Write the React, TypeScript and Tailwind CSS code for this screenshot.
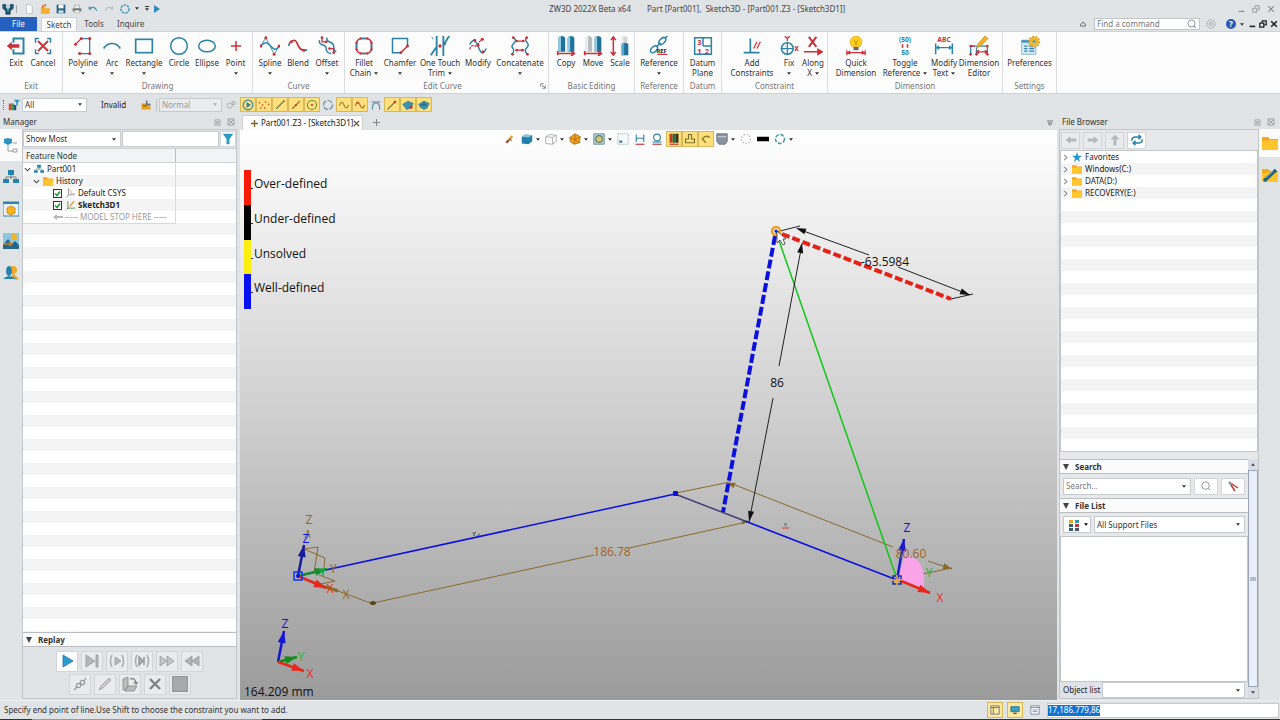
import type { ReactNode } from "react";
import clsx from "clsx";

const TEAL = "#2b83a6";
const RED = "#c9303a";

type IconProps = {
  children: ReactNode;
  box?: number;
  className?: string;
};

function Icon({ children, box = 24, className = "size-6" }: IconProps) {
  return (
    <svg viewBox={`0 0 ${box} ${box}`} className={clsx("shrink-0", className)} fill="none" stroke={TEAL} strokeWidth={1.5} aria-hidden="true">
      {children}
    </svg>
  );
}

function Caret({ className = "text-[#333]" }: { className?: string }) {
  return (
    <svg viewBox="0 0 6 4" className={clsx("h-[3px] w-1 shrink-0 pointer-events-none", className)} aria-hidden="true">
      <path d="M0 0h6L3 4z" fill="currentColor" />
    </svg>
  );
}

function Dots({ points, r = 1.4 }: { points: number[][]; r?: number }) {
  return (
    <g fill={RED} stroke="none">
      {points.map(([x, y]) => (
        <circle key={`${x}-${y}`} cx={x} cy={y} r={r} />
      ))}
    </g>
  );
}

/* ---------- ribbon ---------- */

const pillar = (x: number, y: number, h: number, fill: string, top: string) => (
  <g stroke="none">
    <path d={`M${x} ${y + 3}q0-3 3.5-3T${x + 8} ${y + 2}v${h}h-8z`} fill={fill} />
    <path d={`M${x} ${y + 4}q0-4 3-4v${h + 2}h-3z`} fill={top} />
  </g>
);

const ribbonIcons: Record<string, ReactNode> = {
  exit: (
    <>
      <path d="M9 8V3h12v18H9v-5" strokeWidth={2.4} />
      <path d="M1 12l6-5v3h9v4H7v3z" fill={RED} stroke="none" />
    </>
  ),
  cancel: (
    <>
      <path d="M3 8V3h4M17 3h4v5M21 16v5h-4M7 21H3v-5" strokeWidth={1.8} />
      <path d="M6 6l12 12M18 6L6 18" stroke={RED} strokeWidth={2.2} />
    </>
  ),
  polyline: (
    <>
      <path d="M10 3h10v18H8" />
      <path d="M3 10l7-7" stroke={RED} />
      <Dots points={[[3, 10], [10, 3], [20, 3], [20, 21], [8, 21]]} r={1.8} />
    </>
  ),
  arc: <path d="M2 15C7 7 17 7 22 15" strokeWidth={2} />,
  rectangle: <rect x="2" y="4" width="20" height="16" strokeWidth={2} />,
  circle: <circle cx="12" cy="12" r="10" strokeWidth={1.8} />,
  ellipse: <ellipse cx="12" cy="12" rx="10" ry="7" strokeWidth={1.8} />,
  point: <path d="M12 6v12M6 12h12" stroke={RED} strokeWidth={1.8} />,
  spline: (
    <>
      <path d="M1 12C6 6 9 8 12 11s6 9 11 1" strokeWidth={1.8} />
      <path d="M1 12L7 2l10 20 6-10" strokeWidth={1} />
      <Dots points={[[1, 12], [7, 2], [17, 22], [23, 12]]} r={1.8} />
    </>
  ),
  blend: (
    <>
      <path d="M4 7C8 3 10 6 12 11s4 6 7 6" stroke={RED} strokeWidth={2} />
      <path d="M1 12c0-2 1-4 3-5M18 17h5" strokeWidth={2} />
      <Dots points={[[4, 7], [19, 17]]} r={1.8} />
    </>
  ),
  offset: (
    <>
      <path d="M3 5c-2 8 8 3 8 10 0 4 3 6 6 6M12 2c-2 7 8 4 8 10 0 4 1 6 3 7" strokeWidth={1.8} />
      <path d="M6 2v5h5M20 20v-5h-5" stroke={RED} />
      <Dots points={[[6, 2], [11, 7], [15, 15], [20, 20]]} r={1.6} />
    </>
  ),
  fillet: (
    <>
      <rect x="3" y="3" width="18" height="18" rx="6" stroke={RED} strokeWidth={1.8} />
      <path d="M9 3h6M9 21h6M3 9v6M21 9v6" strokeWidth={2} />
      <Dots points={[[8, 3], [16, 3], [8, 21], [16, 21], [3, 8], [3, 16], [21, 8], [21, 16]]} />
    </>
  ),
  chamfer: (
    <>
      <path d="M21 12V3H3v17h10" strokeWidth={1.8} />
      <path d="M13 20l8-8" stroke={RED} strokeWidth={1.8} />
      <Dots points={[[13, 20], [21, 12]]} r={1.7} />
    </>
  ),
  trim: (
    <>
      <path d="M8 0v24M1 23l7-10M16 0v24M16 11l7-11M19 8l-3 4" strokeWidth={2.2} />
      <path d="M2 1l2 3" strokeWidth={1} />
      <Dots points={[[12, 12]]} r={2} />
    </>
  ),
  modify: (
    <>
      <path d="M2 10C7 1 10 7 12 12s5 14 10 3" strokeWidth={1.8} />
      <path d="M2 16c3-9 6-1 9-5s4-7 8-7" stroke={RED} strokeDasharray="3 1" />
      <Dots points={[[8, 5], [12, 11], [17, 4], [18, 19]]} r={1.8} />
    </>
  ),
  concatenate: (
    <>
      <path d="M4 2c8 5-5 8-1 12 3 4 1 6-1 8M20 2c-5 5 5 6 1 11-4 4-3 6 0 9" strokeWidth={1.8} />
      <path d="M8 6h8M8 17h7" stroke={RED} />
      <Dots points={[[4, 2], [20, 2], [8, 6], [16, 6], [8, 17], [15, 17], [3, 22], [21, 22]]} r={1.6} />
    </>
  ),
  copy: (
    <>
      {pillar(3, 0, 17, "#1f719b", "#8ecbe2")}
      {pillar(14, 0, 17, "#1f719b", "#8ecbe2")}
      <path d="M1 21h20M18 18l4 3-4 3M2 18v5" stroke={RED} strokeWidth={2} />
    </>
  ),
  move: (
    <>
      {pillar(3, 0, 17, "#b9bcc0", "#eceef0")}
      {pillar(14, 0, 17, "#1f719b", "#8ecbe2")}
      <path d="M1 21h20M18 18l4 3-4 3M2 18v5" stroke={RED} strokeWidth={2} />
    </>
  ),
  scale: (
    <>
      {pillar(13, 0, 21, "#d3d5d8", "#eff0f2")}
      {pillar(14, 8, 13, "#1f719b", "#5aa9cb")}
      <path d="M4 2v20M1 5l3-4 3 4M1 19l3 4 3-4" stroke={RED} strokeWidth={1.8} />
    </>
  ),
  reference: (
    <>
      <ellipse cx="16" cy="6" rx="5" ry="3" transform="rotate(-45 16 6)" strokeWidth={1.8} />
      <ellipse cx="6" cy="16" rx="5" ry="3" transform="rotate(-45 6 16)" strokeWidth={1.8} />
      <path d="M9 13l5-5M19 3l3-3" strokeWidth={1.8} />
      <text x="9" y="20" fontSize="7" fontWeight="700" fill="#222" stroke="none">REF</text>
      <path d="M10 22h12" stroke={RED} />
    </>
  ),
  datum: (
    <>
      <path d="M2 2h20v20H2zM12 12h10M12 2v10" strokeWidth={1.8} />
      <g fontSize="9" fontWeight="700" fill={RED} stroke="none">
        <text x="5" y="11">3</text>
        <text x="5" y="21">1</text>
        <text x="14" y="21">2</text>
      </g>
    </>
  ),
  addConstraint: (
    <>
      <path d="M10 3v17M2 20h19" strokeWidth={2} />
      <path d="M14 15l4-8M18 15l4-8" stroke={RED} />
    </>
  ),
  fix: (
    <>
      <circle cx="10" cy="15" r="7" strokeWidth={1.8} />
      <path d="M10 7v16M2 15h16" />
      <path d="M7 0l3 3 3-3M10 3v3M19 12l4 6M23 12l-4 6" stroke={RED} />
    </>
  ),
  along: (
    <>
      <path d="M7 1l9 12M16 1L7 13" stroke={RED} strokeWidth={2.4} />
      <path d="M1 19h17M18 16l5 3-5 3z" stroke={RED} strokeWidth={1.8} fill={RED} />
    </>
  ),
  quickDimension: (
    <>
      <circle cx="12" cy="7" r="7" fill="#fbd01f" stroke="#e9a90d" strokeWidth={1} />
      <path d="M10 5l2 6 2-6" stroke="#d98000" strokeWidth={1} />
      <path d="M9 13h6v4H9z" fill="#686868" stroke="none" />
      <path d="M1 17v6M23 17v6M2 20h20M5 18l-3 2 3 2M19 18l3 2-3 2" stroke={RED} />
    </>
  ),
  toggle: (
    <>
      <g fontSize="8" fontWeight="700" fill={TEAL} stroke="none" textAnchor="middle">
        <text x="12" y="7">(50)</text>
        <text x="12" y="23">50</text>
      </g>
      <path d="M9 10v4M15 10v4" stroke={RED} strokeWidth={1.8} />
    </>
  ),
  modifyText: (
    <>
      <text x="12" y="7" fontSize="8" fontWeight="700" fill={RED} stroke="none" textAnchor="middle">ABC</text>
      <path d="M2 9v13M22 9v13" strokeWidth={1.8} />
      <path d="M3 14h18M6 12l-3 2 3 2M18 12l3 2-3 2" />
    </>
  ),
  dimensionEditor: (
    <>
      <path d="M2 11v11M9 14v8M22 11v11M3 12h18" />
      <path d="M9 19h13M12 17l-3 2 3 2M19 17l3 2-3 2M2 12h5" stroke={RED} />
      <path d="M9 15l2-6 8-9 4 3-9 9z" fill="#f2b021" stroke="#b97618" strokeWidth={0.6} />
      <Dots points={[[2, 12], [22, 12], [2, 22], [9, 22], [22, 22]]} r={1.6} />
    </>
  ),
  preferences: (
    <>
      <path d="M2 5h17v17H2z" fill="#d7ebf5" stroke="#80aeca" strokeWidth={1} />
      <path d="M5 12h4M11 12h6M5 15h4M11 15h6M5 18h4M11 18h6" stroke="#3187b5" />
      <path d="M2 5h17v3H2z" fill="#3e91bd" stroke="none" />
      <circle cx="17" cy="7" r="4" stroke="#f0b62a" strokeWidth={4} />
      <circle cx="17" cy="7" r="6.600" stroke="#d99412" strokeDasharray="2 2" />
    </>
  ),
};

type Tool = { icon: string; lines: string[]; menu?: boolean; width: string };
type Group = { title: string; width: string; pad?: string; launcher?: boolean; tools: Tool[] };

const GROUPS: Group[] = [
  {
    title: "Exit",
    width: "w-[63px]",
    pad: "pl-[3px]",
    tools: [
      { icon: "exit", lines: ["Exit"], width: "w-[26px]" },
      { icon: "cancel", lines: ["Cancel"], width: "w-[28px]" },
    ],
  },
  {
    title: "Drawing",
    width: "w-[190px]",
    pad: "pl-1",
    tools: [
      { icon: "polyline", lines: ["Polyline"], menu: true, width: "w-[32px]" },
      { icon: "arc", lines: ["Arc"], menu: true, width: "w-[26px]" },
      { icon: "rectangle", lines: ["Rectangle"], menu: true, width: "w-[38px]" },
      { icon: "circle", lines: ["Circle"], width: "w-[32px]" },
      { icon: "ellipse", lines: ["Ellipse"], width: "w-[24px]" },
      { icon: "point", lines: ["Point"], menu: true, width: "w-[33px]" },
    ],
  },
  {
    title: "Curve",
    width: "w-[92px]",
    pad: "pl-[3px]",
    tools: [
      { icon: "spline", lines: ["Spline"], menu: true, width: "w-[28px]" },
      { icon: "blend", lines: ["Blend"], width: "w-[28px]" },
      { icon: "offset", lines: ["Offset"], menu: true, width: "w-[30px]" },
    ],
  },
  {
    title: "Edit Curve",
    width: "w-[204px]",
    pad: "pl-0.5",
    launcher: true,
    tools: [
      { icon: "fillet", lines: ["Fillet", "Chain"], menu: true, width: "w-[34px]" },
      { icon: "chamfer", lines: ["Chamfer"], menu: true, width: "w-[38px]" },
      { icon: "trim", lines: ["One Touch", "Trim"], menu: true, width: "w-[42px]" },
      { icon: "modify", lines: ["Modify"], width: "w-[34px]" },
      { icon: "concatenate", lines: ["Concatenate"], menu: true, width: "w-[50px]" },
    ],
  },
  {
    title: "Basic Editing",
    width: "w-[86px]",
    pad: "pl-[3px]",
    tools: [
      { icon: "copy", lines: ["Copy"], width: "w-[28px]" },
      { icon: "move", lines: ["Move"], width: "w-[26px]" },
      { icon: "scale", lines: ["Scale"], width: "w-[28px]" },
    ],
  },
  {
    title: "Reference",
    width: "w-[49px]",
    tools: [{ icon: "reference", lines: ["Reference"], menu: true, width: "w-[48px]" }],
  },
  {
    title: "Datum",
    width: "w-[38px]",
    tools: [{ icon: "datum", lines: ["Datum", "Plane"], width: "w-[37px]" }],
  },
  {
    title: "Constraint",
    width: "w-[106px]",
    pad: "pl-1.5",
    tools: [
      { icon: "addConstraint", lines: ["Add", "Constraints"], width: "w-[48px]" },
      { icon: "fix", lines: ["Fix"], menu: true, width: "w-[26px]" },
      { icon: "along", lines: ["Along", "X"], menu: true, width: "w-[22px]" },
    ],
  },
  {
    title: "Dimension",
    width: "w-[175px]",
    pad: "pl-1.5",
    tools: [
      { icon: "quickDimension", lines: ["Quick", "Dimension"], width: "w-[44px]" },
      { icon: "toggle", lines: ["Toggle", "Reference"], menu: true, width: "w-[54px]" },
      { icon: "modifyText", lines: ["Modify", "Text"], menu: true, width: "w-[24px]" },
      { icon: "dimensionEditor", lines: ["Dimension", "Editor"], width: "w-[46px]" },
    ],
  },
  {
    title: "Settings",
    width: "w-[54px]",
    tools: [{ icon: "preferences", lines: ["Preferences"], width: "w-[53px]" }],
  },
];

function RibbonButton({ icon, lines, menu, width }: Tool) {
  return (
    <button type="button" className={clsx("flex shrink-0 flex-col items-center whitespace-nowrap leading-[10px] text-[#333]", width)}>
      <Icon className="size-5">{ribbonIcons[icon]}</Icon>
      <span className="mt-0.5">{lines[0]}</span>
      {(lines[1] || menu) && (
        <span className="flex h-[10px] items-center gap-[3px]">
          {lines[1]}
          {menu && <Caret />}
        </span>
      )}
    </button>
  );
}

function Ribbon() {
  return (
    <div className="flex h-[63px] shrink-0 border-y border-[#cfd2d4] bg-[#fcfcfc]">
      {GROUPS.map((group) => (
        <section key={group.title} className={clsx("flex shrink-0 flex-col border-r border-[#dadcde]", group.width)} aria-label={group.title}>
          <div className={clsx("flex flex-1 items-start pt-1", group.pad)}>
            {group.tools.map((tool) => (
              <RibbonButton key={tool.icon} {...tool} />
            ))}
          </div>
          <div className="flex h-[14px] items-center text-[#777]">
            <span className="flex-1 text-center">{group.title}</span>
            {group.launcher && (
              <button type="button" aria-label="More settings" className="pr-0.5">
                <Icon box={8} className="size-1.5">
                  <path d="M1 5V1h4M3 3l4 4M7 3v4H3" stroke="#666" strokeWidth={1} />
                </Icon>
              </button>
            )}
          </div>
        </section>
      ))}
    </div>
  );
}

/* ---------- title and menu rows ---------- */

const quickIcons: { label: string; art: ReactNode }[] = [
  { label: "New", art: <path d="M4 1h6l3 3v11H4z" fill="#fff" stroke="#a9adb0" strokeWidth={1} /> },
  {
    label: "Open",
    art: (
      <>
        <path d="M2 5h5l1 2h7v8H2z" fill="#f6b12c" stroke="#dd9210" strokeWidth={0.6} />
        <path d="M4 7V2h5M7 0l3 2-3 3" stroke="#e06a1b" />
      </>
    ),
  },
  {
    label: "Save",
    art: (
      <>
        <path d="M1 1h14v14H1z" fill="#27617f" stroke="none" />
        <path d="M4 1h8v6H4z" fill="#fff" stroke="none" />
        <path d="M4 10h8v5H4z" fill="#b9dbe9" stroke="none" />
      </>
    ),
  },
  {
    label: "Print",
    art: (
      <>
        <path d="M4 2h8v5H4z" fill="#eee" stroke="#888" strokeWidth={0.8} />
        <path d="M1 7h14v5H1z" fill="#777" stroke="none" />
        <path d="M4 10h8v4H4z" fill="#fff" stroke="#888" strokeWidth={0.8} />
      </>
    ),
  },
  { label: "Undo", art: <path d="M2 8c4-5 10-3 12 3M2 4v4h4" stroke="#3f8fb0" strokeWidth={1.8} /> },
  { label: "Redo", art: <path d="M14 8C10 3 4 5 2 11M14 4v4h-4" stroke="#b9bec2" strokeWidth={1.8} /> },
  { label: "Regenerate", art: <circle cx="8" cy="8" r="6.500" strokeWidth={2.4} strokeDasharray="4 1.500" stroke="#4a9bb8" /> },
];

function TitleBar() {
  return (
    <div className="flex h-[17px] shrink-0 items-center pr-0.5 text-[#444]">
      <Icon box={16} className="ml-0.5 size-3">
        <path d="M1 2h4v4l3 3 3-3V2h4v5l-4 4v4H5v-4L1 7z" fill="#1d5878" stroke="#0f3550" strokeWidth={0.8} />
        <path d="M6 3h4M8 5v6" stroke="#8cc6dd" strokeWidth={1.4} />
      </Icon>
      <span className="ml-0.5 mr-1 h-2 w-px bg-[#aaa]" />
      {quickIcons.map(({ label, art }) => (
        <button key={label} type="button" aria-label={label} className="flex w-4 justify-center">
          <Icon box={16} className="size-2.5">{art}</Icon>
        </button>
      ))}
      <Caret className="ml-0.5 text-[#333]" />
      <span className="ml-1.5 flex flex-col items-center gap-px">
        <span className="h-px w-1 bg-[#333]" />
        <Caret />
      </span>
      <Icon box={8} className="ml-1 size-2">
        <path d="M1 0l6 4-6 4z" fill="#2c8ac0" stroke="none" />
      </Icon>
      <h1 className="flex flex-1 justify-center gap-4 whitespace-nowrap">
        <span>ZW3D 2022X Beta x64</span>
        <span>Part [Part001],&nbsp; Sketch3D - [Part001.Z3 - [Sketch3D1]]</span>
      </h1>
      <WindowButtons stroke="#888" />
    </div>
  );
}

function WindowButtons({ stroke, compact }: { stroke: string; compact?: boolean }) {
  const cell = compact ? "flex w-[11px] justify-center" : "flex w-[15px] justify-center";
  return (
    <>
      <button type="button" aria-label="Minimize" className={cell}>
        <Icon box={10} className="size-2"><path d="M2 8h7" stroke={stroke} strokeWidth={compact ? 2 : 1.4} /></Icon>
      </button>
      <button type="button" aria-label="Restore" className={cell}>
        <Icon box={10} className="size-2"><path d="M1 4h5v5H1zM4 3V1h5v5H7" stroke={stroke} strokeWidth={compact ? 1.6 : 1} /></Icon>
      </button>
      <button type="button" aria-label="Close" className={cell}>
        <Icon box={10} className="size-2"><path d="M1.500 1.500l7 7M8.500 1.500l-7 7" stroke={stroke} strokeWidth={compact ? 2 : 1.4} /></Icon>
      </button>
    </>
  );
}

function MenuRow() {
  return (
    <div className="flex h-[14px] shrink-0 items-center pr-px text-[#444]">
      <button type="button" className="h-full w-[37px] bg-[#2460c0] text-white">File</button>
      <button type="button" className="ml-1 h-full w-[36px] border border-b-0 border-[#cfd2d4] bg-[#fcfcfc]">Sketch</button>
      <button type="button" className="ml-1.5 w-[22px]">Tools</button>
      <button type="button" className="ml-3 w-[26px]">Inquire</button>
      <span className="flex-1" />
      <button type="button" aria-label="Collapse ribbon" className="mr-[7px]">
        <Icon box={8} className="size-2"><path d="M1 6h6M1 5l3-3 3 3" stroke="#666" strokeWidth={1} /></Icon>
      </button>
      <label className="flex h-3 w-[106px] items-center border border-[#c3c6c9] bg-white px-0.5">
        <input type="search" aria-label="Find a command" placeholder="Find a command" className="min-w-0 flex-1 outline-none placeholder:text-[#777]" />
        <Icon box={10} className="size-2.5"><path d="M7 7l2 2M8 4.500a3.500 3.500 0 1 1-7 0 3.500 3.500 0 0 1 7 0z" stroke="#888" strokeWidth={0.9} /></Icon>
      </label>
      <Icon box={12} className="ml-1.5 size-2.5">
        <circle cx="6" cy="6" r="5" stroke="#999" strokeWidth={1.2} strokeDasharray="2 1" />
        <circle cx="6" cy="6" r="2" stroke="#999" strokeWidth={1} />
      </Icon>
      <button type="button" aria-label="Help" className="ml-2.5 flex size-2.5 items-center justify-center rounded-full bg-[#2a59b5] font-bold leading-[10px] text-white">?</button>
      <Caret className="ml-1 mr-0.5 text-[#333]" />
      <WindowButtons stroke="#222" compact />
    </div>
  );
}

/* ---------- filter bar ---------- */

type ComboProps = {
  label: string;
  value: string;
  className?: string;
  disabled?: boolean;
};

function Combo({ label, value, className, disabled }: ComboProps) {
  return (
    <div className={clsx("flex items-center border border-[#c8cbce] pl-0.5 pr-1", disabled ? "bg-[#e9ebec] text-[#999]" : "bg-white text-[#333]", className)}>
      <select aria-label={label} disabled={disabled} defaultValue={value} className="min-w-0 flex-1 appearance-none bg-transparent outline-none">
        <option>{value}</option>
      </select>
      <Caret className={disabled ? "text-[#aaa]" : "text-[#333]"} />
    </div>
  );
}

const snapTools: { label: string; lit: boolean; art: ReactNode }[] = [
  {
    label: "Snap on",
    lit: true,
    art: (
      <>
        <circle cx="8" cy="8" r="6.500" />
        <path d="M6 4l6 4-6 4z" fill={TEAL} stroke="none" />
      </>
    ),
  },
  { label: "Points", lit: true, art: <Dots points={[[2, 5], [6, 8], [10, 4], [14, 7], [4, 12], [9, 12]]} r={1.1} /> },
  { label: "End point", lit: true, art: <><path d="M3 13L12 4" stroke="#5b7a52" /><Dots points={[[13, 3]]} /></> },
  { label: "Mid point", lit: true, art: <><path d="M3 13L13 3" stroke="#8a6a32" /><Dots points={[[8, 8]]} /></> },
  { label: "Center", lit: true, art: <><circle cx="8" cy="8" r="6" stroke="#6f8a4a" /><Dots points={[[8, 8]]} /></> },
  { label: "Quadrant", lit: false, art: <circle cx="8" cy="8" r="6" stroke="#6590a8" strokeDasharray="7 2" /> },
  { label: "Knots", lit: true, art: <path d="M2 9C4 1 7 5 8 8s4 7 6 0" stroke="#8f8338" /> },
  { label: "Curve", lit: true, art: <><path d="M2 9C4 1 7 5 8 8s4 7 6 0" stroke="#a36a32" /><Dots points={[[5, 5]]} /></> },
  { label: "Tangent", lit: false, art: <><path d="M2 4h12" stroke="#889" /><path d="M3 14C3 2 13 2 13 14" stroke="#4f89ad" /></> },
  { label: "Line", lit: true, art: <><path d="M2 14L12 4" stroke="#6f7440" /><Dots points={[[12, 4]]} r={1.8} /></> },
  { label: "Face", lit: true, art: <><path d="M1 7l7-4 7 3-3 6-6 2z" fill="#3b93b5" stroke="#23708f" strokeWidth={0.8} /><Dots points={[[12, 11]]} r={2} /></> },
  { label: "Solid", lit: true, art: <><path d="M1 7l7-4 7 3-3 6-4 2-5-3z" fill="#3b93b5" stroke="#23708f" strokeWidth={0.8} /><path d="M8 3v5M3 8h9" stroke="#1c4d70" strokeWidth={1} /></> },
];

function FilterBar() {
  return (
    <div className="flex h-[21px] shrink-0 items-center text-[#222]">
      <span className="ml-[3px] h-2.5 border-l border-dotted border-[#666]" />
      <Icon box={16} className="ml-1 size-3">
        <path d="M1 6h4v9H1z" fill="#c8502c" stroke="none" />
        <path d="M5 6h3v9H5z" fill="#3a9455" stroke="none" />
        <path d="M8 8h3v7H8z" fill="#1d5878" stroke="none" />
        <path d="M8 1h8l-3 4v4h-2V5z" fill="#2b9ac6" stroke="none" />
      </Icon>
      <Combo label="Pick filter" value="All" className="ml-0.5 h-[14px] w-[65px]" />
      <span className="ml-[14px] w-[25px] text-center">Invalid</span>
      <Icon box={16} className="ml-[14px] size-3">
        <path d="M2 6h7l2 2h3v6H2z" fill="#e9a11f" stroke="none" />
        <path d="M9 2v5h5M4 9h5" stroke="#2f5568" />
      </Icon>
      <span className="ml-1 h-3 w-px bg-[#c3c6c9]" />
      <Combo label="Line style" value="Normal" disabled className="ml-0.5 h-[14px] w-[63px]" />
      <Icon box={16} className="mx-1 size-2.5">
        <circle cx="6" cy="9" r="4" stroke="#aaa" strokeWidth={2} strokeDasharray="2 1" />
        <circle cx="12" cy="5" r="2.500" stroke="#999" />
      </Icon>
      {snapTools.map(({ label, lit, art }) => (
        <button
          key={label}
          type="button"
          aria-label={label}
          aria-pressed={lit}
          className={clsx("flex h-[15px] w-4 items-center justify-center border", lit ? "border-[#d7b95c] bg-[#ffe07a]" : "border-transparent")}
        >
          <Icon box={16} className="size-3">{art}</Icon>
        </button>
      ))}
    </div>
  );
}

/* ---------- manager panel ---------- */

function PanelTitle({ children }: { children: ReactNode }) {
  return (
    <div className="flex h-[14px] shrink-0 items-center px-[3px] text-[#333]">
      <h2 className="flex-1">{children}</h2>
      <button type="button" aria-label="Float panel" className="mr-1.5">
        <Icon box={8} className="size-[7px]"><path d="M1 1h6v6H1zM3 3h2v2H3z" stroke="#8b8e91" strokeWidth={0.8} /></Icon>
      </button>
      <button type="button" aria-label="Close panel" className="mr-0.5">
        <Icon box={8} className="size-2"><path d="M1 1h6v6H1zM2 2l4 4M6 2L2 6" stroke="#8b8e91" strokeWidth={0.8} /></Icon>
      </button>
    </div>
  );
}

const FOLDER = (
  <>
    <path d="M0 2h6l2 2h8v11H0z" fill="#f5a91a" stroke="none" />
    <path d="M0 6h5l2-1h9v10H0z" fill="#ffc52e" stroke="none" />
  </>
);

const TREE_ART = (
  <>
    <path d="M8 5v5M3 10V8h10v2" stroke="#777" strokeWidth={1} />
    <path d="M5 1h6v5H5zM0 10h6v4H0zM10 10h6v4h-6z" fill="#2383ac" stroke="none" />
  </>
);

const managerTabs: { label: string; art: ReactNode }[] = [
  {
    label: "History",
    art: (
      <>
        <path d="M1 2l4-1 4 1v4L5 8 1 6z" fill="#2c93bd" stroke="none" />
        <path d="M5 8v6h5M10 6h4M10 12h4v3h-4z" stroke="#7d8c96" strokeWidth={0.8} />
      </>
    ),
  },
  { label: "Assembly", art: TREE_ART },
  {
    label: "Visual",
    art: (
      <>
        <path d="M0 1h16v14H0z" fill="#e9f3f8" stroke="#2f86ac" strokeWidth={1} />
        <path d="M0 1h16v2H0z" fill="#2f86ac" stroke="none" />
        <path d="M4 7l4-2 4 2v5l-4 2-4-2z" fill="#f9b41c" stroke="#c77d0c" strokeWidth={0.8} />
      </>
    ),
  },
  {
    label: "View",
    art: (
      <>
        <path d="M0 0h16v16H0z" fill="#8fc7e0" stroke="none" />
        <path d="M0 12l5-6 4 5 3-3 4 4v4H0z" fill="#22688d" stroke="none" />
        <circle cx="11" cy="4" r="3" fill="#f9b41c" stroke="none" />
        <path d="M1 11h7M6 9l3 2-3 2" stroke="#d47b22" />
      </>
    ),
  },
  {
    label: "Role",
    art: (
      <>
        <circle cx="10" cy="5" r="4" fill="#f0a92a" stroke="none" />
        <path d="M8 13l2-5 6 6-3 1z" fill="#f0a92a" stroke="none" />
        <ellipse cx="6" cy="6" rx="3" ry="5" fill="#2a83ad" stroke="none" />
        <path d="M0 14q6-6 13 0z" fill="#2a83ad" stroke="none" />
      </>
    ),
  },
];

function Chevron({ open }: { open?: boolean }) {
  return (
    <Icon box={8} className="size-[7px]">
      <path d={open ? "M1 2.500l3 3 3-3" : "M2.500 1l3 3-3 3"} stroke={open ? "#444" : "#888"} strokeWidth={1.2} />
    </Icon>
  );
}

function CheckItem({ label, bold, art }: { label: string; bold?: boolean; art: ReactNode }) {
  return (
    <label className="flex h-3 items-center pl-[30px]">
      <span className="grid">
        <input type="checkbox" defaultChecked className="col-start-1 row-start-1 size-[9px] appearance-none border border-[#333] bg-white" />
        <svg viewBox="0 0 9 9" className="pointer-events-none col-start-1 row-start-1 size-[9px]" fill="none" stroke="#1c9b34" strokeWidth="1.500" aria-hidden="true">
          <path d="M2 4.500l2 2 3-4" />
        </svg>
      </span>
      <Icon box={16} className="ml-1 mr-0.5 size-2.5">{art}</Icon>
      <span className={clsx(bold && "font-bold")}>{label}</span>
    </label>
  );
}

const replayRows: { label: string; art: ReactNode }[][] = [
  [
    { label: "Play", art: <path d="M4 2l10 6-10 6z" fill="#2a9bcc" stroke="#1b79a4" strokeWidth={0.8} /> },
    { label: "Step", art: <path d="M2 2l9 6-9 6zM12 2h2v12h-2z" fill="#b5b7b9" stroke="#999" strokeWidth={0.8} /> },
    { label: "Play to", art: <><path d="M6 4l6 4-6 4z" fill="#b5b7b9" stroke="#999" strokeWidth={0.8} /><path d="M3 2Q0 8 3 14M13 2q3 6 0 12" stroke="#aaa" /></> },
    { label: "Play feature", art: <><path d="M5 4l4 4-4 4zM10 4v8" fill="#b5b7b9" stroke="#999" /><path d="M3 2Q0 8 3 14M13 2q3 6 0 12" stroke="#aaa" /></> },
    { label: "Fast forward", art: <path d="M1 3l7 5-7 5zM8 3l7 5-7 5z" fill="#c3c5c7" stroke="#999" strokeWidth={0.8} /> },
    { label: "Rewind", art: <path d="M8 3L1 8l7 5zM15 3L8 8l7 5z" fill="#b0b2b4" stroke="#999" strokeWidth={0.8} /> },
  ],
  [
    { label: "Link", art: <path d="M2 14l3-3M12 5l2-3M5 11a2 2 0 1 1 3-3 2 2 0 1 1-3 3zM9 8a2 2 0 1 1 3-3 2 2 0 1 1-3 3z" stroke="#999" strokeWidth={1.2} /> },
    { label: "Edit", art: <path d="M2 14l2-4 8-8 2 2-8 8z" fill="#ccc" stroke="#999" strokeWidth={0.8} /> },
    { label: "Rollback", art: <><path d="M1 3l5-2v9l-3 4H1zM6 10h9l-3 5H3z" fill="#bbb" stroke="#888" strokeWidth={0.8} /><path d="M8 3q5-2 6 4M12 6l2 2 2-2" stroke="#888" /></> },
    { label: "Delete", art: <path d="M3 3l10 10M13 3L3 13" stroke="#808284" strokeWidth={2.4} /> },
    { label: "Image", art: <path d="M0 0h16v16H0z" fill="#a6a8a9" stroke="#8c8e90" /> },
  ],
];

function SectionTitle({ children }: { children: ReactNode }) {
  return (
    <div className="flex h-[15px] shrink-0 items-center gap-1.5 border-y border-[#b9bdc1] bg-[#fbfbfb] pl-[3px] font-bold text-[#333]">
      <svg viewBox="0 0 6 6" className="size-1.5" aria-hidden="true"><path d="M0 0h6L3 6z" fill="#444" /></svg>
      <h3>{children}</h3>
    </div>
  );
}

const STRIPES = "bg-[repeating-linear-gradient(#ffffff_0px_12px,#f4f4f4_12px_24px)]";

function ManagerPanel() {
  return (
    <aside className="flex w-[240px] shrink-0 flex-col">
      <PanelTitle>Manager</PanelTitle>
      <div className="flex min-h-0 flex-1 pb-px pr-[3px]">
        <nav className="flex w-[22px] shrink-0 flex-col" aria-label="Manager pages">
          {managerTabs.map(({ label, art }, i) => (
            <button key={label} type="button" aria-label={label} className={clsx("flex h-8 items-center justify-center", i === 0 && "bg-[#fbfbfb]")}>
              <Icon box={16} className="size-4">{art}</Icon>
            </button>
          ))}
        </nav>
        <div className="flex min-w-0 flex-1 flex-col border border-[#c3c6c9]">
          <div className="flex h-[18px] shrink-0 items-center gap-px">
            <Combo label="Show" value="Show Most" className="h-4 w-[98px]" />
            <input type="text" aria-label="Filter features" className="h-4 min-w-0 flex-1 border border-[#c8cbce] bg-white px-1 outline-none" />
            <button type="button" aria-label="Filter" className="flex h-4 w-4 items-center justify-center border border-[#d3d6d8] bg-white">
              <Icon box={16} className="size-3"><path d="M1 1h14L10 8v7H6V8z" fill="#2b9ac6" stroke="none" /></Icon>
            </button>
          </div>
          <div className="flex h-[15px] shrink-0 items-center border-y border-[#cfd2d4] bg-[#f2f3f4] text-[#333]">
            <span className="flex h-full w-[153px] items-center border-r border-[#b9bdc1] pl-[3px]">Feature Node</span>
          </div>
          <div className={clsx("min-h-0 flex-1 text-[#222]", STRIPES)}>
            <div className="w-[153px] border-r border-b border-[#d8dadc]">
              <div className="flex h-3 items-center gap-[3px] pl-px"><Chevron open /><Icon box={16} className="size-2.5">{TREE_ART}</Icon>Part001</div>
              <div className="flex h-3 items-center gap-[3px] pl-[10px]"><Chevron open /><Icon box={16} className="size-2.5">{FOLDER}</Icon>History</div>
              <CheckItem label="Default CSYS" art={<><path d="M4 1v10l-3 4M4 11h10" stroke="#999" /><path d="M4 1l4 4v4h6" stroke="#d98484" strokeWidth={1} /></>} />
              <CheckItem label="Sketch3D1" bold art={<><path d="M3 2v11h12" stroke="#53a05a" /><path d="M6 10l7-8" stroke="#e79c2b" strokeWidth={2} /><path d="M1 15l3-3" /></>} />
              <div className="flex h-3 items-center gap-0.5 whitespace-nowrap pl-[30px] text-[#999]">
                <Icon box={10} className="size-2.5"><path d="M0 5l4-3v2h6v2H4v2z" fill="#b5b7b9" stroke="none" /></Icon>
                ----- MODEL STOP HERE -----
              </div>
            </div>
          </div>
          <SectionTitle>Replay</SectionTitle>
          <div className="flex h-[51px] shrink-0 flex-col items-center justify-center gap-0.5">
            {replayRows.map((row, r) => (
              <div key={r} className="flex gap-[3px]">
                {row.map(({ label, art }, i) => (
                  <button key={label} type="button" aria-label={label} className={clsx("flex h-[21px] w-[22px] items-center justify-center border border-[#d3d6d8]", r === 0 && i === 0 ? "bg-white" : "bg-[#e9ebec]")}>
                    <Icon box={16} className="size-4">{art}</Icon>
                  </button>
                ))}
              </div>
            ))}
          </div>
        </div>
      </div>
    </aside>
  );
}

/* ---------- 3D view ---------- */

const legend = [
  { label: "Over-defined", color: "bg-[#f81c08]" },
  { label: "Under-defined", color: "bg-black" },
  { label: "Unsolved", color: "bg-[#fcee10]" },
  { label: "Well-defined", color: "bg-[#0810f0]" },
];

type ViewTool = { label: string; art: ReactNode; menu?: boolean; lit?: boolean };

const viewTools: ViewTool[] = [
  { label: "Brush", art: <><path d="M5 11l6-7" stroke="#e0a13a" strokeWidth={3.400} /><path d="M3 13l3-3" stroke="#9a4330" strokeWidth={3} /><path d="M7 8l3 2" stroke="#557" /></> },
  { label: "Shaded", menu: true, art: <><path d="M1 5l5-3 9 1v8l-5 4-9-1z" fill="#2480a8" stroke="none" /><path d="M1 5l5-3 9 1-5 3z" fill="#85c6df" stroke="none" /></> },
  { label: "Wireframe", menu: true, art: <path d="M1 5l5-3 9 1v8l-5 4-9-1zM1 5l9 1 5-3M10 6v9" stroke="#999" strokeWidth={1} /> },
  { label: "Facets", menu: true, art: <><path d="M1 6l7-5 7 4-1 8-7 2-5-3z" fill="#f3a51f" stroke="#a9640e" strokeWidth={1} /><path d="M1 6l7 3 7-4M8 9l-1 6M8 1v8l6 4" stroke="#a9640e" strokeWidth={1} /></> },
  { label: "Zoom", menu: true, art: <><path d="M1 1h14v14H1z" fill="#a9cfdd" stroke="#587f93" strokeWidth={1} /><circle cx="8" cy="8" r="4.500" fill="#d6c87a" stroke="#6b7b52" /></> },
  { label: "Window", art: <><path d="M1 1h14v14H1z" fill="#f5f9fb" stroke="#8fabb9" strokeWidth={1} strokeDasharray="2 1" /><path d="M3 10h4v3H3z" fill={TEAL} stroke="none" /></> },
  { label: "Height", art: <><path d="M3 2v10M13 2v10M3 7h10" /><path d="M2 15h12" stroke={RED} /></> },
  { label: "Align", art: <><circle cx="8" cy="6" r="4.500" /><path d="M2 12h12" /><path d="M2 15h12" stroke={RED} /></> },
  { label: "Constraint colours", lit: true, art: <><path d="M2 1h4v12H2z" fill="#c8391c" stroke="none" /><path d="M6 1h4v12H6z" fill="#2c6b3a" stroke="none" /><path d="M10 1h4v12h-4z" fill="#3a2f20" stroke="none" /><path d="M2 15h12" stroke={RED} /></> },
  { label: "Show constraints", lit: true, art: <path d="M6 2h4v6h4v5H2V8h4z" stroke="#75702f" /> },
  { label: "Show open ends", lit: true, art: <path d="M13 6Q8 2 3 8l5 5" stroke="#8a8030" strokeWidth={2} /> },
  { label: "Background", menu: true, art: <><path d="M1 1h14v10l-3 4H4l-3-4z" fill="#8a93a0" stroke="#5f6670" strokeWidth={1} /><path d="M2 5h12" stroke="#c7d0da" /></> },
  { label: "Hidden", art: <circle cx="8" cy="8" r="6" stroke="#aab4ba" strokeDasharray="2 2" /> },
  { label: "Line width", art: <path d="M0 5h16v6H0z" fill="#000" stroke="none" /> },
  { label: "Regenerate", menu: true, art: <circle cx="8" cy="8" r="6" stroke="#4a9ba8" strokeWidth={2} strokeDasharray="5 2" /> },
];

function ViewToolbar() {
  return (
    <div className="absolute inset-x-0 top-px flex h-4 justify-center">
      {viewTools.map(({ label, art, menu, lit }) => (
        <button
          key={label}
          type="button"
          aria-label={label}
          className={clsx(
            "flex items-center",
            menu ? "w-6 gap-[3px] pl-0.5" : "justify-center",
            lit ? "w-4 border border-[#d7b95c] bg-[#ffe07a]" : !menu && "w-[17px]",
          )}
        >
          <Icon box={16} className="size-3">{art}</Icon>
          {menu && <Caret />}
        </button>
      ))}
    </div>
  );
}

type Point = [number, number];

// Filled arrow whose tip sits on `to`, pointing away from `from`
function ArrowHead({ from, to, size = 10, half = 3, fill }: { from: Point; to: Point; size?: number; half?: number; fill: string }) {
  const angle = (Math.atan2(to[1] - from[1], to[0] - from[0]) * 180) / Math.PI;
  return (
    <path
      d={`M0 0L${-size} ${-half}L${-size} ${half}Z`}
      transform={`translate(${to[0]} ${to[1]}) rotate(${angle})`}
      fill={fill}
      stroke="none"
    />
  );
}

function Axis({ from, to, color }: { from: Point; to: Point; color: string }) {
  return (
    <g>
      <line x1={from[0]} y1={from[1]} x2={to[0]} y2={to[1]} stroke={color} strokeWidth={2.5} />
      <ArrowHead from={from} to={to} size={12} half={4} fill={color} />
    </g>
  );
}

const OLIVE = "#8a6a2c";
const BLUE = "#0c10dc";

function SketchDrawing() {
  return (
    <svg viewBox="240 130 817 569" preserveAspectRatio="xMinYMin meet" className="block h-full w-full" fill="none" role="img" aria-label="3D sketch">
      {/* reference dimensions */}
      <g stroke={OLIVE} strokeWidth={1}>
        <path d="M298 576L373 604M373 603L594 555M629 548L747 522M676 493L730 482M730 483L893 547M928 561L952 569M897 579L952 568" />
        <path d="M304 549l14-2-4 26M304 549l21 9-2 18M319 575l16 6-14 3" />
      </g>
      <ellipse cx="373" cy="603" rx="3" ry="2" fill="#59461d" />
      <ArrowHead from={[629, 548]} to={[749, 521]} size={7} half={2} fill={OLIVE} />
      <ArrowHead from={[893, 547]} to={[728, 483]} size={7} half={3} fill={OLIVE} />
      <ArrowHead from={[928, 561]} to={[952, 569]} size={9} half={3} fill={OLIVE} />

      {/* base lines */}
      <path d="M897 580L905 555Q924 558 924 580L924 588z" fill="#f9a4e6" />
      <path d="M298 576L675 494M745 521L897 580" stroke={BLUE} strokeWidth={1.5} />
      <path d="M675 494L745 521" stroke="#433f78" strokeWidth={1.5} />
      <rect x="673" y="491" width="5" height="5" rx="1" fill={BLUE} />

      {/* driven lines */}
      <path d="M776 232L897 579" stroke="#10c818" strokeWidth={1.5} />
      <path d="M775 236L723 512" stroke={BLUE} strokeWidth={4} strokeDasharray="9 3" />
      <path d="M782 234L951 299" stroke="#e42218" strokeWidth={4} strokeDasharray="8 3" />

      <g stroke="#222" strokeWidth={1}>
        <path d="M776 232l24-6M951 299l22-5" />
        <path d="M798 229L869 255M898 267L970 295" />
        <path d="M802 244L779 366M773 398L749 522" />
      </g>
      <ArrowHead from={[869, 255]} to={[796, 228]} fill="#111" />
      <ArrowHead from={[898, 267]} to={[970, 295]} fill="#111" />
      <ArrowHead from={[779, 366]} to={[802, 243]} fill="#111" />
      <ArrowHead from={[773, 398]} to={[749, 522]} size={11} fill="#111" />

      {/* picked point and pointer */}
      <circle cx="776" cy="231" r="4" stroke="#f0a020" strokeWidth={2.5} />
      <circle cx="776" cy="231" r="1.500" fill={BLUE} />
      <path d="M777 231v12l3-3 3 5 2-1-2-5h3z" fill="#fff" stroke="#333" strokeWidth={0.8} />

      {/* origin */}
      <Axis from={[298, 576]} to={[304, 545]} color="#1a1a9c" />
      <Axis from={[298, 576]} to={[327, 569]} color="#188c30" />
      <Axis from={[298, 576]} to={[326, 588]} color="#e8281c" />
      <path d="M305 538l3-8 2 8" stroke={OLIVE} />
      <path d="M326 587l12 4" stroke={OLIVE} strokeWidth={3} />
      <rect x="294" y="572" width="8" height="8" stroke="#0a34ff" strokeWidth={1.5} />
      <circle cx="298" cy="576" r="2" fill={BLUE} />

      {/* active sketch frame */}
      <Axis from={[897, 580]} to={[904, 539]} color="#1a1acc" />
      <Axis from={[899, 580]} to={[930, 593]} color="#e8281c" />
      <rect x="893" y="576" width="8" height="8" stroke="#172e9c" strokeWidth={1.5} />
      <path d="M897 575v10M892 580h10" stroke="#f0b030" strokeWidth={1.5} />

      {/* view triad */}
      <Axis from={[278, 662]} to={[284, 631]} color="#1515d8" />
      <Axis from={[278, 662]} to={[297, 657]} color="#128c1c" />
      <Axis from={[278, 662]} to={[304, 671]} color="#e8281c" />

      <g fontSize="12" textAnchor="middle">
        <text x="309" y="524" fill={OLIVE}>Z</text>
        <text x="306" y="543" fill={BLUE}>Z</text>
        <text x="322" y="576" fill="#20b838" fontSize="11">Y</text>
        <text x="333" y="573" fill={OLIVE}>Y</text>
        <text x="330" y="593" fill="#f02c20">X</text>
        <text x="346" y="599" fill={OLIVE}>X</text>
        <text x="907" y="532" fill={BLUE}>Z</text>
        <text x="929" y="577" fill="#20b838">Y</text>
        <text x="940" y="602" fill="#f02c20">X</text>
        <text x="285" y="628" fill={BLUE}>Z</text>
        <text x="301" y="661" fill="#20b838">Y</text>
        <text x="310" y="678" fill="#f02c20">X</text>
        <text x="885" y="266" fill="#111">-63.5984</text>
        <text x="777" y="387" fill="#111">86</text>
        <text x="612" y="556" fill="#a86018">186.78</text>
        <text x="911" y="558" fill="#a86018">80.60</text>
      </g>
      <g strokeWidth={1}>
        <path d="M473 532l1 2 2-2M474 534v2M477 536l3-2" stroke="#345c48" />
        <path d="M782 528h7M784 526l3-3M784 523l3 3" stroke="#d83a34" />
      </g>
    </svg>
  );
}

function Workspace() {
  return (
    <main className="flex min-w-0 flex-1 flex-col">
      <div className="flex h-[15px] shrink-0 items-center pr-[3px]">
        <div className="ml-0.5 flex h-full w-[121px] items-center border border-b-0 border-[#cfd2d4] bg-[#fcfcfc] pl-2 text-[#222]">
          <Icon box={8} className="size-[7px]"><path d="M4 0v8M0 4h8" stroke="#7b6a38" strokeWidth={1.6} /></Icon>
          <span className="ml-[3px] flex-1 whitespace-nowrap">Part001.Z3 - [Sketch3D1]</span>
          <button type="button" aria-label="Close document" className="mr-[3px]">
            <Icon box={8} className="size-[7px]"><path d="M1 1l6 6M7 1L1 7" stroke="#5b5436" strokeWidth={1.6} /></Icon>
          </button>
        </div>
        <button type="button" aria-label="New document" className="ml-2.5">
          <Icon box={8} className="size-[7px]"><path d="M4 0v8M0 4h8" stroke="#888" strokeWidth={1.2} /></Icon>
        </button>
        <span className="flex-1" />
        <Icon box={8} className="size-2"><path d="M1 2h6M2 4l2 2.500L6 4z" stroke="#777" strokeWidth={1} /></Icon>
      </div>
      <div className="relative min-h-0 flex-1 bg-linear-to-b from-white via-[#cfcfcf] to-[#9b9b9b] font-['Open_Sans','Noto_Sans',sans-serif]">
        <SketchDrawing />
        <ViewToolbar />
        <ul className="absolute left-1 top-10 flex h-[139px] flex-col text-[12px] text-[#111]">
          {legend.map(({ label, color }) => (
            <li key={label} className="flex flex-1">
              <span className={clsx("w-[7px]", color)} />
              <span className="mr-px mt-[18px] h-px w-0.5 bg-[#333]" />
              <span className="leading-[27px]">{label}</span>
            </li>
          ))}
        </ul>
        <p className="absolute bottom-0 left-1 text-[12px] leading-4 text-[#111]">164.209 mm</p>
      </div>
    </main>
  );
}

/* ---------- file browser ---------- */

const drives = ["Windows(C:)", "DATA(D:)", "RECOVERY(E:)"];

const browseButtons: { label: string; art: ReactNode }[] = [
  { label: "Back", art: <path d="M1 8l6-5v3h8v4H7v3z" fill="#b5b7b9" stroke="none" /> },
  { label: "Forward", art: <path d="M15 8L9 3v3H1v4h8v3z" fill="#b5b7b9" stroke="none" /> },
  { label: "Up", art: <path d="M8 1l6 6h-4v8H6V7H2z" fill="#b5b7b9" stroke="none" /> },
  { label: "Refresh", art: <path d="M1 9q0-6 7-5h4M10 1l3 3-3 3M15 7q0 6-7 5H4M6 15l-3-3 3-3" stroke="#2482ab" strokeWidth={2} /> },
];

function FileBrowser() {
  return (
    <aside className="flex w-[223px] shrink-0 flex-col pl-0.5">
      <PanelTitle>File Browser</PanelTitle>
      <div className="flex min-h-0 flex-1 pb-px">
        <div className="flex min-w-0 flex-1 flex-col border border-[#c3c6c9] bg-[#e6e8ea]">
          <div className="flex h-[20px] shrink-0 items-center gap-[3px] px-px">
            {browseButtons.map(({ label, art }) => (
              <button key={label} type="button" aria-label={label} className={clsx("flex h-[17px] w-[19px] items-center justify-center border border-[#d3d6d8]", label === "Refresh" ? "bg-white" : "bg-[#e9ebec]")}>
                <Icon box={16} className="size-3">{art}</Icon>
              </button>
            ))}
          </div>
          <ul className={clsx("mb-[7px] min-h-0 flex-1 border border-[#c3c6c9] text-[#222]", STRIPES)}>
            <li className="flex h-3 items-center gap-[3px] pl-px">
              <Chevron />
              <Icon box={16} className="size-2.5"><path d="M8 0l2 6h6l-5 4 2 6-5-4-5 4 2-6-5-4h6z" fill="#1d9ad0" stroke="none" /></Icon>
              Favorites
            </li>
            {drives.map((drive) => (
              <li key={drive} className="flex h-3 items-center gap-[3px] pl-px">
                <Chevron />
                <Icon box={16} className="size-2.5">{FOLDER}</Icon>
                {drive}
              </li>
            ))}
          </ul>
          <div className="flex h-[239px] shrink-0">
            <div className="flex min-w-0 flex-1 flex-col">
              <SectionTitle>Search</SectionTitle>
              <div className="flex h-[24px] shrink-0 items-center gap-[3px] px-[3px]">
                <label className="flex h-[17px] min-w-0 flex-1 items-center border border-[#c8cbce] bg-white pl-0.5 pr-1">
                  <input type="search" aria-label="Search files" placeholder="Search..." className="min-w-0 flex-1 outline-none placeholder:text-[#777]" />
                  <Caret />
                </label>
                <button type="button" aria-label="Search" className="flex h-[17px] w-6 items-center justify-center border border-[#d3d6d8] bg-white">
                  <Icon box={12} className="size-2.5"><path d="M9 9l2 2M10 5.500a4.500 4.500 0 1 1-9 0 4.500 4.500 0 0 1 9 0z" stroke="#888" strokeWidth={1} /></Icon>
                </button>
                <button type="button" aria-label="Clear search" className="flex h-[17px] w-6 items-center justify-center border border-[#d3d6d8] bg-white">
                  <Icon box={12} className="size-3"><path d="M2 2l3 3" stroke="#999" strokeWidth={2.5} /><path d="M4 5l4 6M5 4l6 4" stroke="#c03a3a" strokeWidth={1.5} /></Icon>
                </button>
              </div>
              <SectionTitle>File List</SectionTitle>
              <div className="flex h-[23px] shrink-0 items-center gap-[3px] px-[3px]">
                <button type="button" aria-label="View mode" className="flex h-[17px] w-7 items-center justify-between border border-[#c8cbce] bg-white pl-1 pr-0.5">
                  <Icon box={12} className="size-3">
                    <path d="M1 1h4v3H1z" fill="#e8a020" stroke="none" />
                    <path d="M1 5h4v3H1zM1 9h4v3H1zM7 9h4v3H7z" fill="#3b5b74" stroke="none" />
                    <path d="M7 1h4v3H7z" fill="#3b93b5" stroke="none" />
                    <path d="M7 5h4v3H7z" fill="#b83a3a" stroke="none" />
                  </Icon>
                  <Caret className="text-black" />
                </button>
                <Combo label="File type" value="All Support Files" className="h-[17px] min-w-0 flex-1" />
              </div>
              <div className="min-h-0 flex-1 border border-[#c3c6c9] bg-white" />
              <div className="flex h-4 shrink-0 items-center gap-0.5 bg-[#e0e3ea] px-[3px] text-[#222]">
                <label htmlFor="object-list" className="whitespace-nowrap">Object list</label>
                <div className="flex h-4 min-w-0 flex-1 items-center border border-[#c8cbce] bg-white pr-1">
                  <select id="object-list" className="min-w-0 flex-1 appearance-none outline-none" />
                  <Caret />
                </div>
              </div>
            </div>
            <div className="flex w-2.5 shrink-0 flex-col items-center bg-[#d9dde6] py-1">
              <Caret className="rotate-180 text-[#444]" />
              <div className="my-1 flex w-2.5 flex-1 items-center justify-center border border-[#98a4b8] bg-[#e9eff8]">
                <span className="h-1 w-1.5 bg-[#b3bccb]" />
              </div>
              <Caret className="text-[#444]" />
            </div>
          </div>
        </div>
        <nav className="flex w-[21px] shrink-0 flex-col" aria-label="Browser pages">
          <button type="button" aria-label="Files" className="flex h-[28px] items-center justify-center bg-[#fbfbfb]">
            <Icon box={16} className="size-4">{FOLDER}</Icon>
          </button>
          <button type="button" aria-label="Library" className="mt-2 flex h-[20px] items-center justify-center">
            <Icon box={16} className="size-4">
              {FOLDER}
              <path d="M2 14L14 3" stroke="#245f80" strokeWidth={3.500} />
              <path d="M4 11l7-7" stroke="#73b4d0" strokeWidth={1} />
            </Icon>
          </button>
        </nav>
      </div>
    </aside>
  );
}

/* ---------- status bar ---------- */

function StatusBar() {
  return (
    <footer className="shrink-0 text-[#333]">
      <div className="flex h-[19px] items-center border-t border-[#eef0f1] pl-1 pr-px">
        <p className="flex-1">Specify end point of line.Use Shift to choose the constraint you want to add.</p>
        <div className="mr-1 flex items-center gap-1">
          <button type="button" aria-label="Manager" className="flex size-4 items-center justify-center border border-[#d7b95c] bg-[#ffe9a0]">
            <Icon box={12} className="size-2.5"><path d="M1 1h10v10H1zM1 3h10M4 3v8" stroke="#55727f" strokeWidth={1} /></Icon>
          </button>
          <button type="button" aria-label="Output" className="flex size-4 items-center justify-center border border-[#d7b95c] bg-[#ffe9a0]">
            <Icon box={12} className="size-2.5"><path d="M1 2h10v6H1z" fill="#3b9fc6" stroke="#25708f" strokeWidth={1} /><path d="M4 10h4" stroke="#444" /></Icon>
          </button>
          <button type="button" aria-label="Calculator" className="flex size-4 items-center justify-center">
            <Icon box={12} className="size-2.5"><path d="M1 1h10v10H1z" fill="#fff" stroke="#62819a" strokeWidth={1} /><path d="M1 3h10M3 6h6M3 8h6" stroke="#62819a" strokeWidth={1} /></Icon>
          </button>
        </div>
        <div className="flex h-[15px] w-[232px] items-center border border-[#c8cbce] bg-white">
          <input type="text" aria-label="Coordinates" defaultValue="17,186.779,86" className="h-[11px] bg-[#0f74d4] text-white outline-none [field-sizing:content]" />
        </div>
      </div>
      <div className="flex h-px">
        <span className="w-8 bg-[#333]" />
        <span className="w-[230px] bg-[#999]" />
        <span className="flex-1 bg-[#333]" />
      </div>
    </footer>
  );
}

export default function App() {
  return (
    <div className="flex h-screen flex-col overflow-hidden bg-[#e1e4e6] font-['Noto_Sans','Open_Sans',sans-serif] text-[8px] leading-[12px]">
      <header className="flex shrink-0 flex-col">
        <TitleBar />
        <MenuRow />
        <Ribbon />
        <FilterBar />
      </header>
      <div className="flex min-h-0 flex-1">
        <ManagerPanel />
        <Workspace />
        <FileBrowser />
      </div>
      <StatusBar />
    </div>
  );
}
